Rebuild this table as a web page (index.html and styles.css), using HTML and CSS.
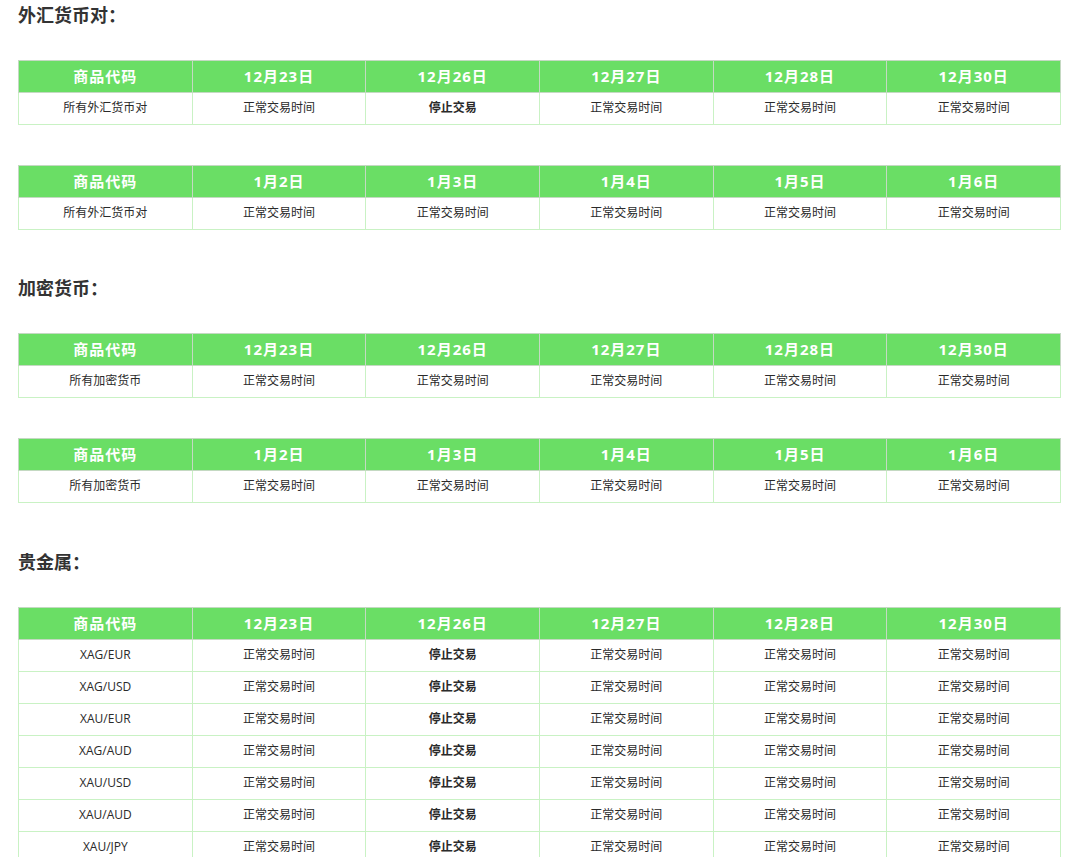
FILE: index.html
```html
<!DOCTYPE html>
<html lang="zh-CN">
<head>
<meta charset="utf-8">
<title>交易时间</title>
<link rel="stylesheet" href="styles.css">
</head>
<body>
<div class="page">
  <h3 class="title">外汇货币对：</h3>
  <table class="sched">
    <tr class="head"><th>商品代码</th><th>12月23日</th><th>12月26日</th><th>12月27日</th><th>12月28日</th><th>12月30日</th></tr>
    <tr><td>所有外汇货币对</td><td>正常交易时间</td><td class="stop">停止交易</td><td>正常交易时间</td><td>正常交易时间</td><td>正常交易时间</td></tr>
  </table>
  <table class="sched second">
    <tr class="head"><th>商品代码</th><th>1月2日</th><th>1月3日</th><th>1月4日</th><th>1月5日</th><th>1月6日</th></tr>
    <tr><td>所有外汇货币对</td><td>正常交易时间</td><td>正常交易时间</td><td>正常交易时间</td><td>正常交易时间</td><td>正常交易时间</td></tr>
  </table>

  <h3 class="title sec">加密货币：</h3>
  <table class="sched">
    <tr class="head"><th>商品代码</th><th>12月23日</th><th>12月26日</th><th>12月27日</th><th>12月28日</th><th>12月30日</th></tr>
    <tr><td>所有加密货币</td><td>正常交易时间</td><td>正常交易时间</td><td>正常交易时间</td><td>正常交易时间</td><td>正常交易时间</td></tr>
  </table>
  <table class="sched second">
    <tr class="head"><th>商品代码</th><th>1月2日</th><th>1月3日</th><th>1月4日</th><th>1月5日</th><th>1月6日</th></tr>
    <tr><td>所有加密货币</td><td>正常交易时间</td><td>正常交易时间</td><td>正常交易时间</td><td>正常交易时间</td><td>正常交易时间</td></tr>
  </table>

  <h3 class="title sec last">贵金属：</h3>
  <table class="sched">
    <tr class="head"><th>商品代码</th><th>12月23日</th><th>12月26日</th><th>12月27日</th><th>12月28日</th><th>12月30日</th></tr>
    <tr><td>XAG/EUR</td><td>正常交易时间</td><td class="stop">停止交易</td><td>正常交易时间</td><td>正常交易时间</td><td>正常交易时间</td></tr>
    <tr><td>XAG/USD</td><td>正常交易时间</td><td class="stop">停止交易</td><td>正常交易时间</td><td>正常交易时间</td><td>正常交易时间</td></tr>
    <tr><td>XAU/EUR</td><td>正常交易时间</td><td class="stop">停止交易</td><td>正常交易时间</td><td>正常交易时间</td><td>正常交易时间</td></tr>
    <tr><td>XAG/AUD</td><td>正常交易时间</td><td class="stop">停止交易</td><td>正常交易时间</td><td>正常交易时间</td><td>正常交易时间</td></tr>
    <tr><td>XAU/USD</td><td>正常交易时间</td><td class="stop">停止交易</td><td>正常交易时间</td><td>正常交易时间</td><td>正常交易时间</td></tr>
    <tr><td>XAU/AUD</td><td>正常交易时间</td><td class="stop">停止交易</td><td>正常交易时间</td><td>正常交易时间</td><td>正常交易时间</td></tr>
    <tr><td>XAU/JPY</td><td>正常交易时间</td><td class="stop">停止交易</td><td>正常交易时间</td><td>正常交易时间</td><td>正常交易时间</td></tr>
  </table>
</div>
</body>
</html>
```

FILE: styles.css
```css
html, body {
  margin: 0;
  padding: 0;
  background: #ffffff;
}
body {
  font-family: "Open Sans", "Noto Sans CJK SC", sans-serif;
  color: #333333;
}
.page {
  width: 1043px;
  margin-left: 18px;
}
.title {
  margin: 0 0 32px 0;
  font-size: 18px;
  line-height: 28px;
  font-weight: bold;
  color: #333333;
  font-family: "Noto Sans CJK SC", sans-serif;
}
.title.sec {
  margin-top: 43px;
}
.title.last {
  margin-top: 44px;
}
.sched {
  width: 1043px;
  border-collapse: collapse;
  table-layout: fixed;
}
.sched.second {
  margin-top: 40px;
}
.sched tr {
  height: 32px;
}
.sched th {
  background: #6ade65;
  color: #ffffff;
  font-size: 15px;
  letter-spacing: 1px;
  line-height: 20px;
  font-weight: bold;
  border: 1px solid #c4d9c2;
  padding: 0 0 2px 0;
  text-align: center;
  vertical-align: middle;
}
.sched td {
  border: 1px solid #c9f2c4;
  font-size: 12px;
  line-height: 16px;
  color: #2a2a2a;
  padding: 0 0 2px 0;
  text-align: center;
  vertical-align: middle;
}
.sched td.stop {
  font-weight: bold;
}
```
